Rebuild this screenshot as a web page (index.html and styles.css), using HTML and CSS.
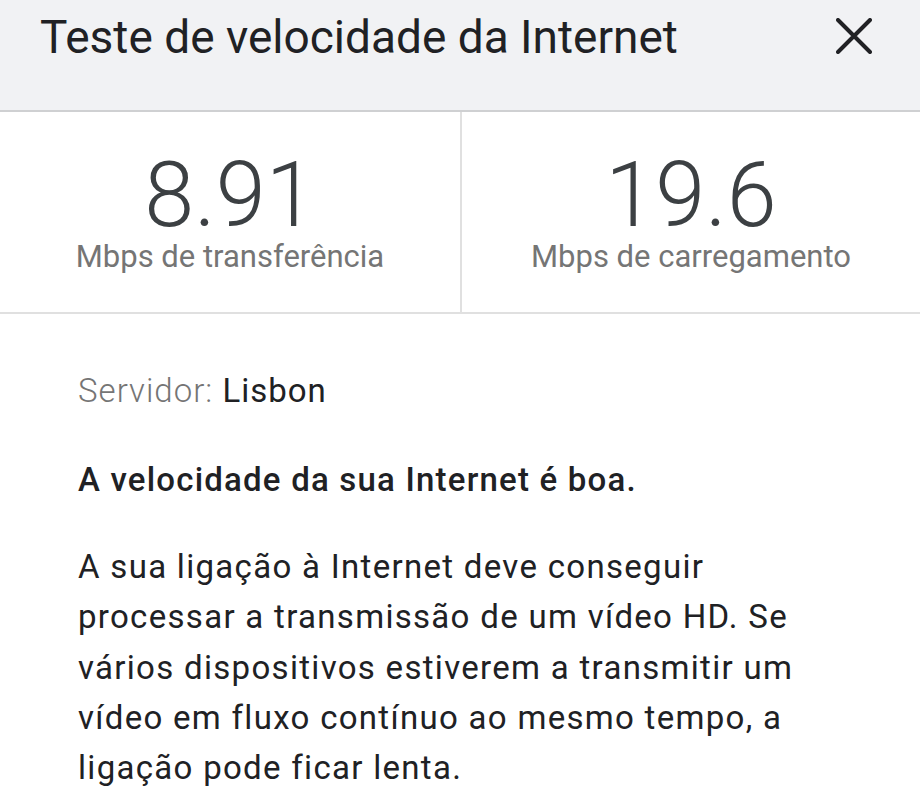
FILE: index.html
```html
<!DOCTYPE html>
<html lang="pt">
<head>
  <meta charset="UTF-8">
  <meta name="viewport" content="width=device-width, initial-scale=1.0">
  <title>Teste de velocidade da Internet</title>
  <link rel="stylesheet" href="styles.css">
</head>
<body>

  <header class="top-bar">
    <h1 class="top-title">Teste de velocidade da Internet</h1>
    <button class="close-btn" aria-label="Fechar">
      <svg width="36" height="36" viewBox="0 0 36 36">
        <path d="M2 2 L34 34 M34 2 L2 34" stroke="#202124" stroke-width="4" stroke-linecap="round" fill="none"/>
      </svg>
    </button>
  </header>

  <section class="results">
    <div class="result">
      <div class="result-value">8.91</div>
      <div class="result-label">Mbps de transferência</div>
    </div>
    <div class="result">
      <div class="result-value">19.6</div>
      <div class="result-label">Mbps de carregamento</div>
    </div>
  </section>

  <main class="details">
    <p class="server"><span class="server-label">Servidor:</span> Lisbon</p>
    <p class="verdict">A velocidade da sua Internet é boa.</p>
    <p class="explain">A sua ligação à Internet deve conseguir processar a transmissão de um vídeo HD. Se vários dispositivos estiverem a transmitir um vídeo em fluxo contínuo ao mesmo tempo, a ligação pode ficar lenta.</p>
  </main>

</body>
</html>
```

FILE: styles.css
```css
body {
  font-family: 'Roboto', 'Liberation Sans', sans-serif;
  margin: 0;
  padding: 0;
  background-color: #fff;
  color: #202124;
}

.top-bar {
  display: flex;
  align-items: flex-start;
  justify-content: space-between;
  height: 112px;
  padding: 0 48px 0 40px;
  background-color: #f1f2f4;
  border-bottom: 2px solid #cfd0d2;
  box-sizing: border-box;
}

.top-title {
  margin: 10px 0 0;
  font-size: 46px;
  font-weight: 400;
  line-height: normal;
}

.close-btn {
  margin-top: 18px;
  padding: 0;
  border: 0;
  background: none;
  line-height: 0;
  cursor: pointer;
}

.results {
  display: grid;
  grid-template-columns: 462px 1fr;
  border-bottom: 2px solid #e0e0e0;
}

.result {
  display: flex;
  flex-direction: column;
  align-items: center;
  height: 200px;
  padding-top: 39px;
  box-sizing: border-box;
}

.result:first-child {
  border-right: 2px solid #e0e0e0;
}

.result-value {
  font-size: 90px;
  font-weight: 300;
  line-height: 90px;
  color: #3c4043;
}

.result-label {
  font-size: 31px;
  line-height: 32px;
  color: #757575;
}

.details {
  padding: 52px 78px 0;
}

.details p {
  margin: 0;
  font-size: 33px;
  line-height: 50px;
  letter-spacing: 1px;
}

.server-label {
  font-weight: 300;
  color: #757575;
}

.details .verdict {
  margin-top: 39px;
  font-weight: 500;
  letter-spacing: 1.2px;
}

.details .explain {
  margin-top: 37px;
  line-height: 50.3px;
  letter-spacing: 1.3px;
}
```
